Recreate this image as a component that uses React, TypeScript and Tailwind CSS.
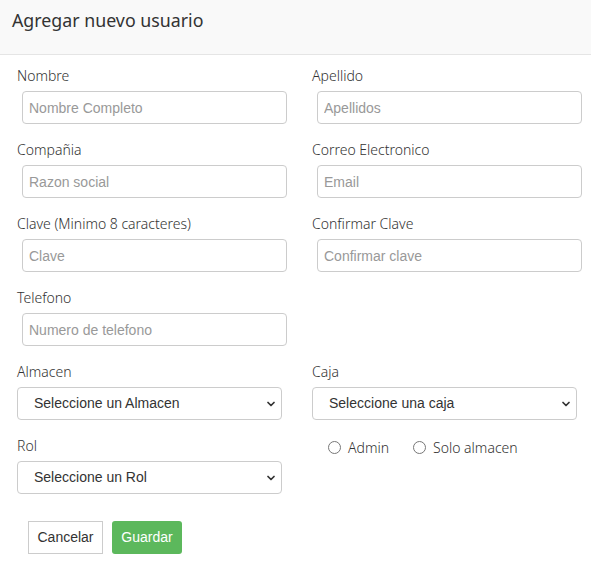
import { ChevronDown } from "lucide-react";

const label = "block h-5 text-[14px] leading-5 font-light text-[#333] [font-family:'Noto_Sans',sans-serif]";
const input =
  "block h-[33px] w-[265px] ml-[5px] mt-[5px] rounded border border-[#ccc] bg-white px-[6px] text-[14px] text-[#555] placeholder:text-[#999] [font-family:'Liberation_Sans',Arial,sans-serif] outline-none";

const Field = ({ name, hint }: { name: string; hint: string }) => (
  <div className="h-[74px]">
    <label className={label}>{name}</label>
    <input className={input} placeholder={hint} />
  </div>
);

const Select = ({ name, hint }: { name: string; hint: string }) => (
  <div className="h-[74px]">
    <label className={label}>{name}</label>
    <div className="relative mt-[5px] h-[33px] w-[265px]">
      <select className="h-full w-full appearance-none rounded border border-[#ccc] bg-white pl-4 text-[14px] text-[#333] [font-family:'Liberation_Sans',Arial,sans-serif] outline-none">
        <option>{hint}</option>
      </select>
      <ChevronDown size={12} strokeWidth={3.5} className="pointer-events-none absolute right-[5px] top-[11px] text-[#333]" />
    </div>
  </div>
);

const Radio = ({ text }: { text: string }) => (
  <label className="flex h-5 items-center gap-[7px] text-[14px] font-light text-[#333] [font-family:'Noto_Sans',sans-serif]">
    <span className="h-[13px] w-[13px] rounded-full border border-[#777] bg-white" />
    {text}
  </label>
);

export default function App() {
  return (
    <div className="h-[561px] w-[591px] bg-white">
      <div className="h-[55px] border-b border-[#e5e5e5] bg-[#f9f9f9] pl-3 pt-[7px]">
        <h1 className="text-[17.8px] leading-[26px] text-[#333] [font-family:'Noto_Sans',sans-serif]">
          Agregar nuevo usuario
        </h1>
      </div>
      <div className="grid grid-cols-[295px_279px] pl-[17px] pt-[11px]">
        <Field name="Nombre" hint="Nombre Completo" />
        <Field name="Apellido" hint="Apellidos" />
        <Field name="Compañia" hint="Razon social" />
        <Field name="Correo Electronico" hint="Email" />
        <Field name="Clave (Minimo 8 caracteres)" hint="Clave" />
        <Field name="Confirmar Clave" hint="Confirmar clave" />
        <Field name="Telefono" hint="Numero de telefono" />
        <div />
        <Select name="Almacen" hint="Seleccione un Almacen" />
        <Select name="Caja" hint="Seleccione una caja" />
        <Select name="Rol" hint="Seleccione un Rol" />
        <div className="flex items-start gap-[24px] pl-4 pt-[1px]">
          <Radio text="Admin" />
          <Radio text="Solo almacen" />
        </div>
      </div>
      <div className="flex gap-[9px] pl-[28px] pt-[11px] [font-family:'Liberation_Sans',Arial,sans-serif] text-[14px]">
        <button className="h-[33px] w-[75px] border border-[#ccc] bg-white text-[#333]">Cancelar</button>
        <button className="h-[33px] w-[70px] rounded-[3px] bg-[#5cb85c] text-white">Guardar</button>
      </div>
    </div>
  );
}
